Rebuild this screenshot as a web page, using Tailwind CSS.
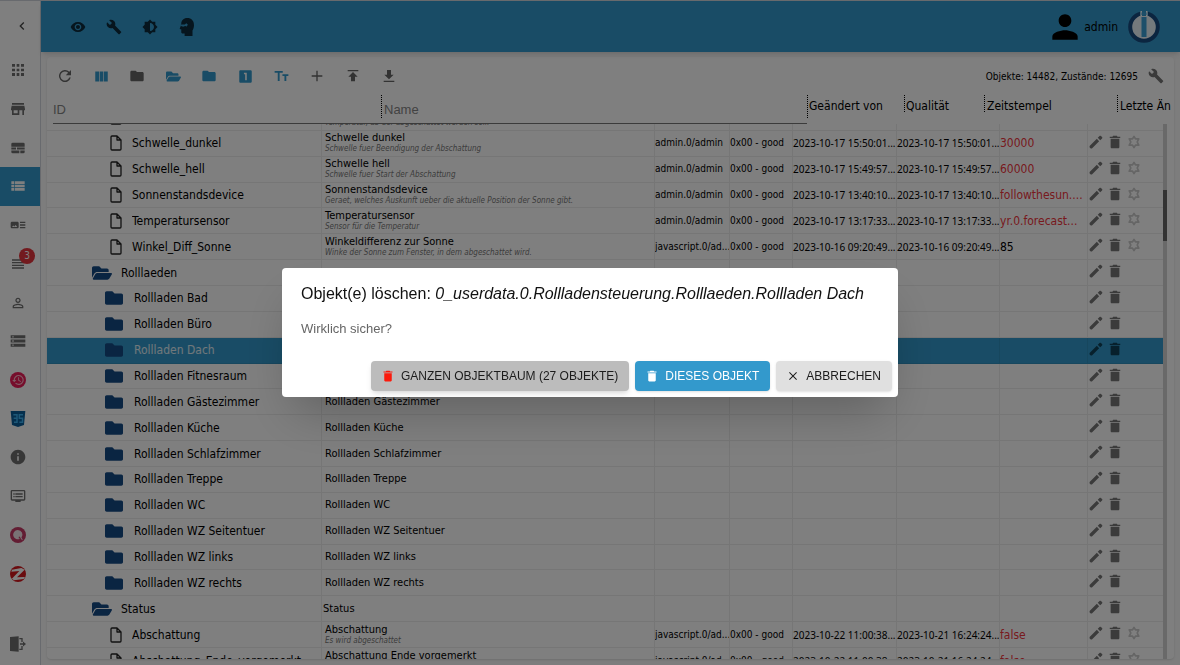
<!DOCTYPE html>
<html lang="de">
<head>
<meta charset="utf-8">
<title>ioBroker Admin – Objekte</title>
<script src="https://cdn.jsdelivr.net/npm/@tailwindcss/browser@4"></script>
</head>
<body class="h-screen overflow-hidden bg-white font-['DejaVu_Sans_Condensed','DejaVu_Sans',sans-serif] text-black">

<svg class="hidden" aria-hidden="true">
  <symbol id="i-left" viewBox="0 0 24 24"><path d="M15.41 7.41L14 6l-6 6 6 6 1.41-1.41L10.83 12z"/></symbol>
  <symbol id="i-apps" viewBox="0 0 24 24"><path d="M3 7h4.500V3H3v4zm7 14h4v-4.500h-4V21zm-7 0h4.500v-4.500H3V21zm0-7h4.500v-4H3v4zm7 0h4v-4h-4v4zm6.500-11v4H21V3h-4.500zM10 7h4V3h-4v4zm6.500 7H21v-4h-4.500v4zm0 7H21v-4.500h-4.500V21z"/></symbol>
  <symbol id="i-store" viewBox="0 0 24 24"><path d="M21 3H3v2.500h18V3zm1.500 11v-2l-1-5h-19l-1 5v2H3v7h11v-7h4.500v7H21v-7h1.500zM11.500 18.500h-6V14h6v4.500z"/></symbol>
  <symbol id="i-subtitles" viewBox="0 0 24 24"><path d="M4 4h16a2 2 0 0 1 2 2v4H2V6a2 2 0 0 1 2-2zM2 11.300h7v3H2zM10.500 11.300H22v3H10.500zM2 15.600h12V20H4a2 2 0 0 1-2-2zM15.500 15.600H22V18a2 2 0 0 1-2 2h-4.500z"/></symbol>
  <symbol id="i-list" viewBox="0 0 24 24"><path d="M2 14h4v-4H2v4zm0 5h4v-4H2v4zM2 9h4V5H2v4zm5 5h15v-4H7v4zm0 5h15v-4H7v4zM7 5v4h15V5H7z"/></symbol>
  <symbol id="i-art" viewBox="0 0 24 24"><path d="M23 13h-8v-2h8v2zm0-6h-8v2h8V7zm-8 10h8v-2h-8v2zm-2-8v6c0 1.100-.9 2-2 2H3c-1.100 0-2-.9-2-2V9c0-1.100.9-2 2-2h8c1.100 0 2 .9 2 2zm-2 6l-2.500-3-2 2.300-1.500-1.500L3 15h8z"/></symbol>
  <symbol id="i-headline" viewBox="0 0 24 24"><path d="M3 15h18v-2H3v2zm0 4h18v-2H3v2zm0-8h18V9H3v2zm0-6v2h18V5H3z"/></symbol>
  <symbol id="i-personline" viewBox="0 0 24 24"><path d="M12 5.900c1.160 0 2.100.94 2.100 2.100s-.94 2.100-2.100 2.100S9.900 9.160 9.900 8s.94-2.100 2.100-2.100m0 9c2.970 0 6.100 1.460 6.100 2.100v1.100H5.900V17c0-.64 3.130-2.100 6.100-2.100M12 4C9.790 4 8 5.790 8 8s1.790 4 4 4 4-1.790 4-4-1.790-4-4-4zm0 9c-2.670 0-8 1.340-8 4v3h16v-3c0-2.660-5.330-4-8-4z"/></symbol>
  <symbol id="i-storage" viewBox="0 0 24 24"><path d="M1 20.500h22V16H1v4.500zm2.500-3.200h2v2h-2v-2zM1 3.500V8h22V3.500H1zm4.500 3.200h-2v-2h2v2zM1 14.200h22V9.800H1v4.400zM3.500 11h2v2h-2v-2z"/></symbol>
  <symbol id="i-history" viewBox="0 0 24 24"><circle cx="12" cy="12" r="12" fill="#ec1c58"/><path fill="#ffb6c8" d="M13 4.500A7.500 7.500 0 0 0 5.500 12H3.300l3.100 3.300L9.600 12H7.200a5.800 5.800 0 1 1 1.700 4.100l-1.200 1.200A7.500 7.500 0 1 0 13 4.500zM12.200 8v4.700l3.700 2.200.7-1.200-3-1.800V8z"/></symbol>
  <symbol id="i-js" viewBox="0 0 24 24"><path fill="#0b5e9b" d="M1 0h22l-2 21-9 3-9-3z"/><path fill="none" stroke="#3bb0f0" stroke-width="2.200" d="M5 5.500h5.500V17H6M5.500 11h5M19.500 5.500H14V11h4.800v6H14"/></symbol>
  <symbol id="i-info" viewBox="0 0 24 24"><path d="M12 1C5.900 1 1 5.900 1 12s4.900 11 11 11 11-4.900 11-11S18.100 1 12 1zm1.200 16.500h-2.400V11h2.400v6.500zm0-8.700h-2.400V6.500h2.400v2.300z"/></symbol>
  <symbol id="i-dvr" viewBox="0 0 24 24"><path d="M21 3H3c-1.100 0-2 .9-2 2v12c0 1.100.9 2 2 2h5v2h8v-2h5c1.100 0 2-.9 2-2V5c0-1.100-.9-2-2-2zm0 14H3V5h18v12zm-2-9H8v2h11V8zm0 4H8v2h11v-2zM7 8H5v2h2V8zm0 4H5v2h2v-2z"/></symbol>
  <symbol id="i-q" viewBox="0 0 24 24"><circle cx="12" cy="12" r="12" fill="#c63a66"/><path fill="#f3e6ea" fill-rule="evenodd" d="M11.500 4.500a7 7 0 1 0 3.800 13l4.200 2.500-2.300-4.200a7 7 0 0 0-5.700-11.300z"/><path fill="#c63a66" d="M13.500 14l4 4-4.500-1z"/></symbol>
  <symbol id="i-z" viewBox="0 0 24 24"><circle cx="12" cy="12" r="12" fill="#d4161c"/><path fill="#fff" d="M3 5.500L17 3l5 2.500L10.500 17l12-.5-2 3L6 21.500 2.800 19 14 7.500 2 8.500z"/></symbol>
  <symbol id="i-logout" viewBox="0 0 24 24"><path d="M0 1.500L13 .5v23L0 22.500zM14 3h5v6h-2V5h-3zM14 21h5v-6h-2v4h-3zM15 11h4.500V8.200L24 12l-4.500 3.800V13H15z"/></symbol>
  <symbol id="i-eye" viewBox="0 0 24 24"><path d="M12 4.500C7 4.500 2.730 7.610 1 12c1.730 4.390 6 7.500 11 7.500s9.270-3.110 11-7.500c-1.730-4.390-6-7.500-11-7.500zM12 17c-2.760 0-5-2.240-5-5s2.240-5 5-5 5 2.240 5 5-2.240 5-5 5zm0-8c-1.660 0-3 1.340-3 3s1.340 3 3 3 3-1.340 3-3-1.340-3-3-3z"/></symbol>
  <symbol id="i-build" viewBox="0 0 24 24"><path d="M22.700 19l-9.100-9.100c.9-2.300.4-5-1.500-6.900-2-2-5-2.400-7.400-1.300L9 6 6 9 1.600 4.700C.4 7.100.9 10.100 2.900 12.100c1.900 1.900 4.600 2.400 6.900 1.500l9.100 9.100c.4.4 1 .4 1.400 0l2.300-2.300c.5-.4.5-1.100.1-1.400z"/></symbol>
  <symbol id="i-bright" viewBox="0 0 24 24"><path fill-rule="evenodd" d="M20 15.310L23.310 12 20 8.690V4h-4.690L12 .69 8.690 4H4v4.690L.69 12 4 15.310V20h4.690L12 23.310 15.310 20H20v-4.690zM12 18V6c3.310 0 6 2.690 6 6s-2.690 6-6 6z"/></symbol>
  <symbol id="i-head" viewBox="0 0 20 24"><path fill-rule="evenodd" d="M11 0C6 0 3 3.300 3 7.500V9L1 14c-.2.600.1 1 .6 1H3v3.500c0 1.300.8 2 2 2h2.500V24H18v-7.500c1-1.800 2-4 2-7C20 3.500 16.500 0 11 0zM2.500 8.500h5.300L9.700 7l2 1.500-1.200 2.800-2.400-.6-2.500 1-3-1z"/></symbol>
  <symbol id="i-person" viewBox="0 0 24 24"><path d="M12 12c2.210 0 4-1.790 4-4s-1.790-4-4-4-4 1.790-4 4 1.790 4 4 4zm0 2c-2.670 0-8 1.340-8 4v2h16v-2c0-2.660-5.330-4-8-4z"/></symbol>
  <symbol id="i-refresh" viewBox="0 0 24 24"><path d="M18.400 5.600A9 9 0 1 0 20.700 14.300h-2.400A6.800 6.800 0 1 1 16.800 7.200L13.200 10.800H21V3z"/></symbol>
  <symbol id="i-cols" viewBox="0 0 24 24"><path d="M9 20h6V4H9v16zM2 20h6V4H2v16zM16 4v16h6V4h-6z"/></symbol>
  <symbol id="i-folder" viewBox="0 0 24 24"><path d="M10 4H4c-1.100 0-2 .9-2 2v12c0 1.100.9 2 2 2h16c1.100 0 2-.9 2-2V8c0-1.100-.9-2-2-2h-8l-2-2z"/></symbol>
  <symbol id="i-folderfa" viewBox="0 0 512 512"><path d="M464 128H272l-64-64H48C21.490 64 0 85.490 0 112v288c0 26.510 21.490 48 48 48h416c26.510 0 48-21.490 48-48V176c0-26.510-21.490-48-48-48z"/></symbol>
  <symbol id="i-open" viewBox="0 0 576 512"><path d="M572.694 292.093L500.270 416.248A63.997 63.997 0 0 1 444.989 448H45.025c-18.523 0-30.064-20.093-20.731-36.093l72.424-124.155A64 64 0 0 1 152 256h399.964c18.523 0 30.064 20.093 20.730 36.093zM152 224h328v-48c0-26.510-21.490-48-48-48H272l-64-64H48C21.490 64 0 85.490 0 112v278.046l69.077-118.418C86.214 242.250 117.989 224 152 224z"/></symbol>
  <symbol id="i-one" viewBox="0 0 24 24"><path d="M20 2H4c-1.100 0-2 .9-2 2v16c0 1.100.9 2 2 2h16c1.100 0 2-.9 2-2V4c0-1.100-.9-2-2-2zm-6 16h-2.500V8.500h-2V6H14v12z"/></symbol>
  <symbol id="i-text" viewBox="0 0 24 24"><path d="M1 3v2.800h5V19h3V5.800h5V3H1zm22 5.500h-9.500v2.800h3.200V19h3v-7.700H23V8.500z"/></symbol>
  <symbol id="i-add" viewBox="0 0 24 24"><path d="M20 13h-7v7h-2v-7H4v-2h7V4h2v7h7v2z"/></symbol>
  <symbol id="i-up" viewBox="0 0 24 24"><path d="M4 3v2h16V3H4zm1 10h4v7h6v-7h4l-7-7-7 7z"/></symbol>
  <symbol id="i-down" viewBox="0 0 24 24"><path d="M19 10h-4V3H9v7H5l7 7 7-7zM4 19v2h16v-2H4z"/></symbol>
  <symbol id="i-edit" viewBox="0 0 24 24"><path d="M1 19v1.500A2.500 2.500 0 0 0 3.500 23H5L17.400 10.600l-4-4L1 19zM22.400 5.900c.7-.7.7-1.600 0-2.300l-2-2c-.7-.7-1.600-.7-2.300 0L15 4.700l4.300 4.300 3.100-3.100z"/></symbol>
  <symbol id="i-trash" viewBox="0 0 24 24"><path d="M4.500 20.500c0 1.300.9 2.300 2 2.300h11c1.100 0 2-1 2-2.300V6.500h-15v14zM21 2.800h-4.700l-1-1.500H8.700l-1 1.500H3v2.200h18V2.800z"/></symbol>
  <symbol id="i-gear" viewBox="0 0 24 24"><path fill="none" stroke="currentColor" stroke-width="3" stroke-linejoin="round" d="M12 2.500l2.600 4.200 5.500-.2-2.600 5.500 2.600 5.500-5.500-.2-2.600 4.200-2.600-4.200-5.500.2L6.500 12 3.900 6.500l5.500.2z"/></symbol>
  <symbol id="i-file" viewBox="0 0 24 32"><path fill="none" stroke="currentColor" stroke-width="2.600" stroke-linejoin="round" d="M4 2h10l8 8v18a2 2 0 0 1-2 2H4a2 2 0 0 1-2-2V4a2 2 0 0 1 2-2zM14 2v8h8"/></symbol>
  <symbol id="i-close" viewBox="0 0 24 24"><path d="M21.500 4.200L19.800 2.500 12 10.300 4.200 2.500 2.500 4.200l7.800 7.800-7.800 7.800 1.700 1.700 7.800-7.800 7.800 7.800 1.700-1.700-7.800-7.800z"/></symbol>
</svg>

<div class="flex h-full border-t border-gray-300">
  <aside class="flex w-[41px] shrink-0 flex-col border-r border-gray-300 bg-white text-[#6e6e6e]">
    <button class="flex h-[50px] items-center justify-center pl-1 text-[#444]" aria-label="Menü einklappen"><svg class="size-4 fill-current"><use href="#i-left"/></svg></button>
    <nav id="nav" class="grid h-[542px] auto-rows-fr"></nav>
    <div class="flex-1"></div>
    <button class="flex h-[42px] items-center justify-center pr-1" aria-label="Abmelden"><svg class="size-4 fill-current"><use href="#i-logout"/></svg></button>
  </aside>

  <div class="flex min-w-0 flex-1 flex-col bg-[#fbfbfb]">
    <header class="z-10 flex h-[51px] shrink-0 items-center bg-[#3399cc] pl-[29px] pr-5 text-black shadow-md">
      <div class="flex flex-1 items-center gap-5 text-[#0c2b3c]">
        <button class="flex size-4 items-center" aria-label="Ansicht"><svg class="size-4 fill-current"><use href="#i-eye"/></svg></button>
        <button class="flex size-4 items-center" aria-label="Systemeinstellungen"><svg class="size-4 fill-current"><use href="#i-build"/></svg></button>
        <button class="flex size-4 items-center" aria-label="Thema wechseln"><svg class="size-4 fill-current"><use href="#i-bright"/></svg></button>
        <button class="flex h-5 w-4 items-center justify-center" aria-label="Expertenmodus"><svg class="h-[18px] w-[15px] fill-current"><use href="#i-head"/></svg></button>
      </div>
      <svg class="size-[38px] fill-current"><use href="#i-person"/></svg>
      <span class="text-xs">admin</span>
      <svg class="ml-2.5 size-8" viewBox="0 0 32 32"><circle cx="16" cy="16" r="13.800" fill="#e9f2f8" stroke="#164a80" stroke-width="4"/><path fill="#3399cc" d="M12 0h8v5h-8z"/><path fill="#fff" d="M12.500 0H14v5h-1.500zM18 0h1.500v5H18z"/><path fill="#3a9fd4" d="M13.500 1.500h5V4h-5zM13.500 6h5v20h-5z"/></svg>
    </header>

    <main class="mx-[6px] mb-[6px] mt-[5px] flex min-h-0 flex-1 flex-col overflow-hidden rounded bg-white shadow">
      <div class="flex h-[38px] shrink-0 items-center px-2.5">
        <div id="tools" class="flex flex-1 items-center gap-5"></div>
        <span class="text-[10px]">Objekte: 14482, Zustände: 12695</span>
        <button class="ml-2.5 text-[#777]" aria-label="Spalten konfigurieren"><svg class="size-4 fill-current"><use href="#i-build"/></svg></button>
      </div>

      <div class="flex h-[29px] shrink-0 pl-[6px] text-xs">
        <input aria-label="ID" placeholder="ID" class="w-[328px] border-b border-[#777] pt-0.5 font-['Liberation_Sans',sans-serif] text-[13px] outline-none placeholder:text-[#858585]">
        <div class="flex w-[426px] border-b border-[#777]">
          <span class="h-[23px] border-l border-dotted border-black"></span>
          <input aria-label="Name" placeholder="Name" class="min-w-0 flex-1 pl-0.5 pt-0.5 font-['Liberation_Sans',sans-serif] text-[13px] outline-none placeholder:text-[#858585]">
        </div>
        <span class="h-[23px] w-[97px] shrink-0 border-l border-dotted border-black pl-px leading-[22px]">Geändert von</span>
        <span class="h-[17px] w-20 shrink-0 border-l border-dotted border-black pl-px leading-[22px]">Qualität</span>
        <span class="h-[17px] w-[133px] shrink-0 border-l border-dotted border-black pl-0.5 leading-[22px]">Zeitstempel</span>
        <span class="h-[17px] shrink-0 border-l border-dotted border-black pl-0.5 leading-[22px] whitespace-nowrap">Letzte Än</span>
      </div>

      <div class="flex min-h-0 flex-1">
        <div class="min-w-0 flex-1 overflow-hidden">
          <table class="-mt-[19px] h-[calc(100%+34px)] w-full table-fixed border-separate border-spacing-0">
            <colgroup><col class="w-[275px]"><col><col class="w-[75px]"><col class="w-[63px]"><col class="w-[104px]"><col class="w-[103px]"><col class="w-[88px]"><col class="w-[75px]"></colgroup>
            <tbody id="rows"></tbody>
          </table>
        </div>
        <div class="mr-[7px] w-1 bg-[#d2d2d2] pt-[66px]"><div class="h-[51px] bg-[#666]"></div></div>
      </div>
    </main>
  </div>
</div>

<div class="fixed inset-0 z-20 flex items-center justify-center bg-black/50">
  <section role="dialog" aria-modal="true" aria-labelledby="dlg" class="w-[616px] max-w-full rounded bg-white font-['Liberation_Sans',sans-serif] shadow-2xl">
    <h2 id="dlg" class="px-[19px] pt-[14px] text-base leading-6 text-[#111]">Objekt(e) löschen: <i>0_userdata.0.Rollladensteuerung.Rolllaeden.Rollladen Dach</i></h2>
    <p class="px-[19px] pt-3 text-[13px] leading-[22px] text-[#666]">Wirklich sicher?</p>
    <div class="flex justify-end gap-[6px] px-[6px] pb-[6px] pt-[21px] text-xs text-[#1c1c1c]">
      <button class="flex h-[30px] items-center gap-[7px] rounded-sm bg-[#bcbcbc] px-[11px] shadow-md"><svg class="size-3 fill-[#fb1a0c]"><use href="#i-trash"/></svg>GANZEN OBJEKTBAUM (27 OBJEKTE)</button>
      <button class="flex h-[30px] items-center gap-[7px] rounded-sm bg-[#3399cc] px-[11px] text-white shadow"><svg class="size-3 fill-current"><use href="#i-trash"/></svg>DIESES OBJEKT</button>
      <button class="flex h-[30px] items-center gap-[7px] rounded-sm bg-[#e0e0e0] px-[11px] shadow"><svg class="size-3 fill-current p-px"><use href="#i-close"/></svg>ABBRECHEN</button>
    </div>
  </section>
</div>

<script>
const navItems = [['apps','Übersicht'],['store','Adapter'],['subtitles','Instanzen'],['list','Objekte'],['art','Aufzählungen'],['headline','Protokolle'],['personline','Benutzer'],['storage','Hosts'],['history','Backup'],['js','Skripte'],['info','Info'],['dvr','Vis'],['q','Parser'],['z','Zigbee']];
document.getElementById('nav').innerHTML = navItems.map(([i, t]) =>
  `<a href="#" aria-label="${t}" class="relative flex items-center justify-center pr-1 ${i === 'list' ? 'bg-[#3399cc] text-white' : ''}">
    <svg class="size-4 fill-current"><use href="#i-${i}"/></svg>
    ${i === 'headline' ? '<span class="absolute left-[19px] top-[3px] flex size-4 items-center justify-center rounded-full bg-[#e5343c] text-[10px] text-white">3</span>' : ''}
  </a>`).join('');

const tools = [['refresh','Aktualisieren',0],['cols','Spalten',1],['folder','Alle zuklappen',0],['open','Alle aufklappen',1],['folder','Eine Ebene',1],['one','Ebene',1],['text','Beschreibung',1],['add','Hinzufügen',0],['up','Importieren',0],['down','Exportieren',0]];
document.getElementById('tools').innerHTML = tools.map(([i, t, blue]) =>
  `<button aria-label="${t}" class="flex size-4 items-center justify-center ${blue ? 'text-[#3399cc]' : 'text-[#666]'}"><svg class="${i === 'refresh' || i === 'folder' || i === 'add' || i === 'up' || i === 'down' ? 'size-4' : 'size-[15px]'} fill-current"><use href="#i-${i}"/></svg></button>`).join('');

const A = 'admin.0/admin', J = 'javascript.0/ad...';
const s = (id, name, desc, by, ts, lc, val, red) => ({k: 's', id, name, desc, by, ts, lc, val, red});
const f = id => ({k: 'f', id: 'Rollladen ' + id, name: 'Rollladen ' + id, sel: id === 'Dach'});
const rows = [
  s('Schwelle_ab', 'Schwelle ab', 'Temperatur, ab der abgeschattet werden soll.', '', '', '', '', 0),
  s('Schwelle_dunkel', 'Schwelle dunkel', 'Schwelle fuer Beendigung der Abschattung', A, '2023-10-17 15:50:01...', '2023-10-17 15:50:01...', '30000', 1),
  s('Schwelle_hell', 'Schwelle hell', 'Schwelle fuer Start der Abschattung', A, '2023-10-17 15:49:57...', '2023-10-17 15:49:57...', '60000', 1),
  s('Sonnenstandsdevice', 'Sonnenstandsdevice', 'Geraet, welches Auskunft ueber die aktuelle Position der Sonne gibt.', A, '2023-10-17 13:40:10...', '2023-10-17 13:40:10...', 'followthesun....', 1),
  s('Temperatursensor', 'Temperatursensor', 'Sensor für die Temperatur', A, '2023-10-17 13:17:33...', '2023-10-17 13:17:33...', 'yr.0.forecast...', 1),
  s('Winkel_Diff_Sonne', 'Winkeldifferenz zur Sonne', 'Winke der Sonne zum Fenster, in dem abgeschattet wird.', J, '2023-10-16 09:20:49...', '2023-10-16 09:20:49...', '85', 0),
  {k: 'o', id: 'Rolllaeden', name: 'Rolllaeden'},
  ...['Bad', 'Büro', 'Dach', 'Fitnesraum', 'Gästezimmer', 'Küche', 'Schlafzimmer', 'Treppe', 'WC', 'WZ Seitentuer', 'WZ links', 'WZ rechts'].map(f),
  {k: 'o', id: 'Status', name: 'Status'},
  s('Abschattung', 'Abschattung', 'Es wird abgeschattet', J, '2023-10-22 11:00:38...', '2023-10-21 16:24:24...', 'false', 1),
  s('Abschattung_Ende_vorgemerkt', 'Abschattung Ende vorgemerkt', 'Ende vorgemerkt', J, '2023-10-22 11:00:38...', '2023-10-21 16:24:24...', 'false', 1)
];
const lead = {
  s: '<span class="flex w-[85px] justify-end pr-[10px]"><svg class="h-4 w-3 shrink-0 text-[#222]"><use href="#i-file"/></svg></span>',
  f: '<span class="flex w-[87px] pl-[58px]"><svg class="h-[18px] w-[18px] shrink-0 fill-[#154a85]"><use href="#i-folderfa"/></svg></span>',
  o: '<span class="flex w-[74px] pl-[45px]"><svg class="h-[18px] w-5 shrink-0 fill-[#154a85]"><use href="#i-open"/></svg></span>'
};
const cell = 'border-b border-r border-black/7 p-0';
document.getElementById('rows').innerHTML = rows.map(r => {
  const small = `${cell} overflow-hidden whitespace-nowrap text-[10px] leading-[14px]`;
  const date = `${small} font-['Noto_Sans',sans-serif]`;
  return `<tr class="h-[25px] ${r.sel ? 'bg-[#3399cc] text-white/85' : ''}">
    <td class="${cell} overflow-hidden"><div class="flex items-center text-xs leading-4">${lead[r.k]}<span class="min-w-0 flex-1 truncate">${r.id}</span></div></td>
    <td class="${cell} ${r.k === 'o' ? 'pl-px' : 'pl-[3px]'} text-[11px]"><div class="leading-3 whitespace-nowrap">${r.name}</div>${r.desc ? `<div class="text-[8px] leading-[10px] italic whitespace-nowrap text-[#777]">${r.desc}</div>` : ''}</td>
    <td class="${small}">${r.by || ''}</td>
    <td class="${small}">${r.by ? '0x00 - good' : ''}</td>
    <td class="${date}">${r.ts || ''}</td>
    <td class="${date}">${r.lc || ''}</td>
    <td class="${cell} overflow-hidden whitespace-nowrap text-xs leading-4 ${r.red ? 'text-[#f0343c]' : ''}">${r.val || ''}</td>
    <td class="border-b border-black/7 p-0"><div class="flex items-center gap-[5px] pb-[3px] pl-px ${r.sel ? 'text-[#0f4058]' : 'text-[#777]'}">
      <button aria-label="Bearbeiten" class="size-[14px]"><svg class="size-[14px] fill-current"><use href="#i-edit"/></svg></button>
      <button aria-label="Löschen" class="size-[14px]"><svg class="size-[14px] fill-current"><use href="#i-trash"/></svg></button>
      ${r.k === 's' ? '<button aria-label="Einstellungen" class="size-[14px] text-[#cacaca]"><svg class="size-[14px]"><use href="#i-gear"/></svg></button>' : ''}
    </div></td></tr>`;
}).join('');
</script>
</body>
</html>
